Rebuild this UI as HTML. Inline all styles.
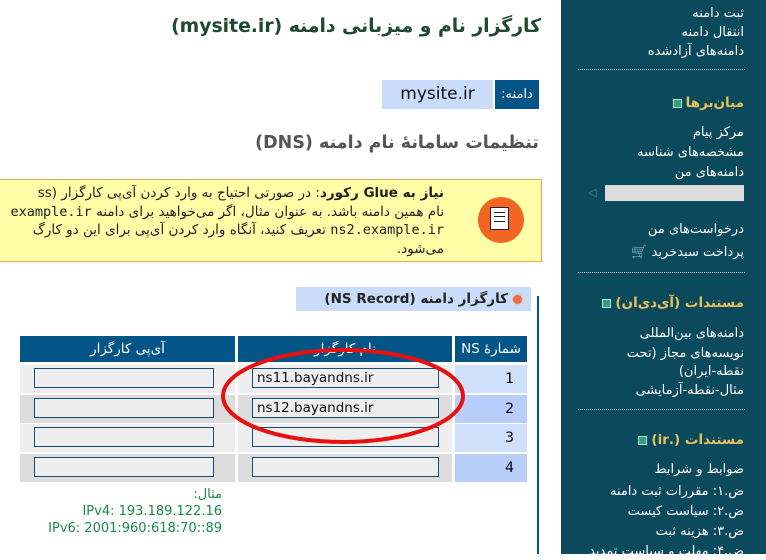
<!DOCTYPE html>
<html><head><meta charset="utf-8"><style>
body{margin:0;width:766px;height:554px;overflow:hidden;background:#fff;font-family:"DejaVu Sans","Liberation Sans","Noto Sans CJK SC",sans-serif;position:relative}
.a{position:absolute;white-space:nowrap}
.r{direction:rtl}
#sb{position:absolute;left:561px;top:0;width:205px;height:554px;background:#0b4a5d;color:#fff;font-size:13px}
#sb .i{position:absolute;right:22px;direction:rtl;white-space:nowrap;line-height:16px}
#sb .h{position:absolute;right:22px;direction:rtl;color:#e9c15a;font-weight:bold;font-size:13.5px;white-space:nowrap;line-height:16px}
#sb .h:after{content:"";display:inline-block;width:7px;height:7px;background:#3a9a7a;border:1px solid #9ed;margin-right:4px;vertical-align:middle}
#sb .d{position:absolute;left:17px;width:167px;border-top:1px dotted #ccc}
.th{position:absolute;top:336px;height:26px;background:#035587;color:#fff;font-size:13.5px;text-align:center;line-height:26px;direction:rtl}
.cell{position:absolute;height:28px}
.inp{position:absolute;height:20px;border:1px solid #164e70;background:#eee;box-sizing:border-box;font-size:13.5px;line-height:18px;padding-left:4px;color:#111}
</style></head><body>
<div class="a r" style="right:225px;top:16px;font-size:18.8px;font-weight:bold;color:#1e4a30">کارگزار نام و میزبانی دامنه (mysite.ir)</div>
<div class="a" style="left:382px;top:80px;width:111px;height:29px;background:#c9dcf9;font-size:17px;line-height:29px;text-align:center;color:#111">mysite.ir</div>
<div class="a r" style="left:495px;top:80px;width:44px;height:29px;background:#035587;color:#fff;font-size:13px;line-height:29px;text-align:center">دامنه:</div>
<div class="a r" style="right:227px;top:133px;font-size:17.5px;font-weight:bold;color:#555">تنظیمات سامانهٔ نام دامنه (DNS)</div>
<div class="a" style="left:-5px;top:179px;width:545px;height:81px;background:#ffffa8;border:1px solid #f0a060"></div>
<div class="a" style="left:478px;top:197px;width:46px;height:46px;border-radius:50%;background:#f26522"></div>
<div class="a" style="left:490px;top:207px;width:19px;height:23px;background:#fff;border:1px solid #222;box-sizing:border-box;font-size:0"><div style="margin:4px 3px;border-top:1.5px solid #222;height:3px;border-bottom:1.5px solid #222"></div><div style="margin:0 3px;border-top:1.5px solid #222"></div></div>
<div class="a r" style="right:322px;top:184px;font-size:13.5px;line-height:18.5px;color:#222;text-align:right"><b>نیاز به Glue رکورد</b>: در صورتی احتیاج به وارد کردن آی‌پی کارگزار (ss<br>نام همین دامنه باشد. به عنوان مثال، اگر می‌خواهید برای دامنه <span style="font-family:'DejaVu Sans Mono',monospace">example.ir</span><br><span style="font-family:'DejaVu Sans Mono',monospace">ns2.example.ir</span> تعریف کنید، آنگاه وارد کردن آی‌پی برای این دو کارگ<br>می‌شود.</div>
<div class="a r" style="left:296px;top:287px;width:235px;height:24px;background:#c9dcf9;font-size:13.5px;font-weight:bold;line-height:24px;color:#222;padding-right:8px;box-sizing:border-box"><span style="display:inline-block;width:9px;height:9px;border-radius:50%;background:#e07050;border:1px solid #f3c0a0;vertical-align:middle;margin-left:4px"></span>کارگزار دامنه (NS Record)</div>
<div class="a" style="left:537px;top:296px;width:2px;height:258px;background:#035587"></div>
<div class="th" style="left:20px;width:215px">آی‌پی کارگزار</div>
<div class="th" style="left:238px;width:214px">نام کارگزار</div>
<div class="th" style="left:455px;width:72px">شمارهٔ NS</div>
<div class="cell" style="left:20px;top:365px;width:215px;background:#eee"></div><div class="cell" style="left:238px;top:365px;width:214px;background:#eee"></div><div class="cell" style="left:455px;top:365px;width:72px;background:#cfdffc;font-size:14px;line-height:28px;text-align:right;padding-right:13px;box-sizing:border-box">1</div>
<div class="cell" style="left:20px;top:395px;width:215px;background:#ddd"></div><div class="cell" style="left:238px;top:395px;width:214px;background:#ddd"></div><div class="cell" style="left:455px;top:395px;width:72px;background:#b8cdfa;font-size:14px;line-height:28px;text-align:right;padding-right:13px;box-sizing:border-box">2</div>
<div class="cell" style="left:20px;top:424px;width:215px;background:#eee"></div><div class="cell" style="left:238px;top:424px;width:214px;background:#eee"></div><div class="cell" style="left:455px;top:424px;width:72px;background:#cfdffc;font-size:14px;line-height:28px;text-align:right;padding-right:13px;box-sizing:border-box">3</div>
<div class="cell" style="left:20px;top:454px;width:215px;background:#ddd"></div><div class="cell" style="left:238px;top:454px;width:214px;background:#ddd"></div><div class="cell" style="left:455px;top:454px;width:72px;background:#b8cdfa;font-size:14px;line-height:28px;text-align:right;padding-right:13px;box-sizing:border-box">4</div>
<div class="inp" style="left:34px;top:368px;width:180px"></div><div class="inp" style="left:252px;top:368px;width:187px">ns11.bayandns.ir</div>
<div class="inp" style="left:34px;top:398px;width:180px"></div><div class="inp" style="left:252px;top:398px;width:187px">ns12.bayandns.ir</div>
<div class="inp" style="left:34px;top:427px;width:180px"></div><div class="inp" style="left:252px;top:427px;width:187px"></div>
<div class="inp" style="left:34px;top:457px;width:180px"></div><div class="inp" style="left:252px;top:457px;width:187px"></div>
<div class="a" style="left:40px;top:486px;width:182px;text-align:right;font-size:13px;line-height:17px;color:#1a8a4a"><span dir="rtl">مثال:</span><br>IPv4: 193.189.122.16<br>IPv6: 2001:960:618:70::89</div>
<svg class="a" style="left:0;top:0" width="560" height="554"><ellipse cx="343" cy="396" rx="120" ry="46" fill="none" stroke="#e81010" stroke-width="4"/></svg>
<div id="sb">
<div class="i" style="top:6px">ثبت دامنه</div>
<div class="i" style="top:25px">انتقال دامنه</div>
<div class="i" style="top:44px">دامنه‌های آزادشده</div>
<div class="d" style="top:69px"></div>
<div class="h" style="top:95px">میان‌برها</div>
<div class="i" style="top:125px">مرکز پیام</div>
<div class="i" style="top:145px">مشخصه‌های شناسه</div>
<div class="i" style="top:165px">دامنه‌های من</div>
<div style="position:absolute;left:44px;top:185px;width:139px;height:16px;background:#ddd"></div>
<div style="position:absolute;left:27px;top:186px;font-size:11px;color:#3a9a7a">◁</div>
<div class="i" style="top:222px">درخواست‌های من</div>
<div class="i" style="top:245px">پرداخت سبدخرید 🛒</div>
<div class="d" style="top:272px"></div>
<div class="h" style="top:295px">مستندات (آی‌دی‌ان)</div>
<div class="i" style="top:326px">دامنه‌های بین‌المللی</div>
<div class="i" style="top:346px">نویسه‌های مجاز (تحت</div>
<div class="i" style="top:364px">نقطه-ایران)</div>
<div class="i" style="top:383px">مثال-نقطه-آزمایشی</div>
<div class="d" style="top:409px"></div>
<div class="h" style="top:432px">مستندات (.ir)</div>
<div class="i" style="top:462px">ضوابط و شرایط</div>
<div class="i" style="top:484px">ض.۱: مقررات ثبت دامنه</div>
<div class="i" style="top:504px">ض.۲: سیاست کیست</div>
<div class="i" style="top:524px">ض.۳: هزینه ثبت</div>
<div class="i" style="top:544px">ض.۴: مهلت و سیاست تمدید</div>
</div>
</body></html>
